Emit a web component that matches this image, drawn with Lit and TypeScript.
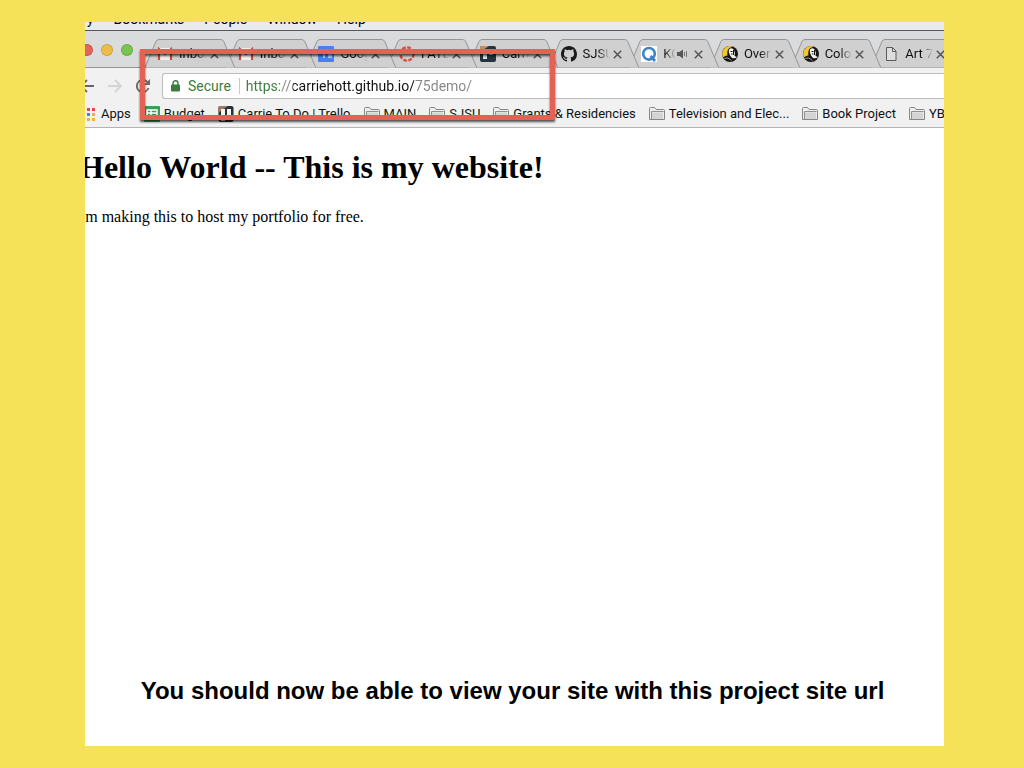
import { LitElement, html, css, svg, TemplateResult } from "lit";
import { customElement, property } from "lit/decorators.js";

const icons: Record<string, TemplateResult> = {
  gmail: svg`<rect x="1" y="2" width="14" height="12" fill="#f3f1f0"/><path d="M2 14V3l6 5 6-5v11" fill="none" stroke="#c9483c" stroke-width="2.2"/>`,
  calendar: svg`<rect width="16" height="16" rx="1" fill="#4a80ec"/><path d="M3 5h3v7M9 5h2v7M13 5v7" stroke="#fff" fill="none" stroke-width="1.2"/>`,
  canvas: svg`<circle cx="8" cy="8" r="6.6" fill="none" stroke="#d94b3a" stroke-width="2.4" stroke-dasharray="3.7 1.48"/>`,
  trello: svg`<rect width="16" height="16" rx="2" fill="#24343f"/><path d="M0 2Q0 0 2 0h7L0 6z" fill="#c98b5c"/><rect x="3" y="3" width="4" height="10" fill="#dfe6ea"/><rect x="9" y="3" width="4" height="6" fill="#dfe6ea"/>`,
  github: svg`<path fill="#1b1b1b" d="M8 0C3.58 0 0 3.58 0 8c0 3.54 2.29 6.53 5.47 7.59.4.07.55-.17.55-.38 0-.19-.01-.82-.01-1.49-2.01.37-2.53-.49-2.69-.94-.09-.23-.48-.94-.82-1.13-.28-.15-.68-.52-.01-.53.63-.01 1.08.58 1.23.82.72 1.21 1.87.87 2.33.66.07-.52.28-.87.51-1.07-1.78-.2-3.64-.89-3.64-3.95 0-.87.31-1.59.82-2.15-.08-.2-.36-1.02.08-2.12 0 0 .67-.21 2.2.82a7.6 7.6 0 014 0c1.53-1.04 2.2-.82 2.2-.82.44 1.1.16 1.92.08 2.12.51.56.82 1.27.82 2.15 0 3.07-1.87 3.75-3.65 3.95.29.25.54.73.54 1.48 0 1.07-.01 1.93-.01 2.2 0 .21.15.46.55.38A8.01 8.01 0 0016 8c0-4.42-3.58-8-8-8z"/>`,
  kqed: svg`<rect width="16" height="16" fill="#fff"/><circle cx="8" cy="7.8" r="5.8" fill="none" stroke="#3d83c6" stroke-width="2.6"/><path d="M9.5 10l4.5 5" stroke="#3d83c6" stroke-width="2.8"/>`,
  portrait: svg`<circle cx="8" cy="8" r="8" fill="#151412"/><path d="M8 0A8 8 0 001 11.500Q4 9 5.500 9.500 4.500 3 8.500 1.500L11 .6Q9.500 0 8 0z" fill="#f6c72c"/><path d="M7 3.500Q10 1 12 4q1.500 3 .5 6L15 11q-2 2-5 1L8 9.500Q6 6 7 3.500z" fill="#f2f0ea"/><path d="M8.500 5.500h2M9 8h1.500M11.500 4v5" fill="none" stroke="#151412"/><path d="M2.500 12.500q3-1.500 5 .5l2 1.500" fill="none" stroke="#cfcbc0" stroke-width=".8"/>`,
  page: svg`<path d="M3.500 1.500h6l3.500 3.500v9.500H3.500z" fill="#ddd" stroke="#5c5c5c"/><path d="M9.500 1.500V5.500H13" fill="none" stroke="#5c5c5c"/>`,
  sheets: svg`<rect width="16" height="16" rx="1" fill="#3f9c58"/><path d="M3 4h10v9H3zM3 7h10M3 10h10M7 4v9" fill="none" stroke="#fff" stroke-width="1.400"/>`,
  board: svg`<rect x=".5" width="15" height="16" rx="2" fill="#26313a"/><path d="M0 2Q0 0 2 0h8L0 7z" fill="#9c7a63"/><rect x="3" y="3" width="4" height="12" fill="#f5f5f5"/><rect x="9" y="3" width="4" height="9" fill="#f5f5f5"/>`,
  folder: svg`<path d="M.5 13.500v-11q0-1 1-1h4l1.500 2h7.500q1 0 1 1v9z" fill="#eee" stroke="#868686"/><path d="M2.500 13V6.500h11.500V13z" fill="#d4d4d4"/><path d="M2.500 13V5.500h12" fill="none" stroke="#909090"/>`,
  apps: svg`<rect x="1" y="2" width="3" height="3" fill="#db4b3f"/><rect x="6" y="2" width="3" height="3" fill="#db4b3f"/><rect x="11" y="2" width="3" height="3" fill="#db4b3f"/><rect x="1" y="7" width="3" height="3" fill="#3f9c58"/><rect x="6" y="7" width="3" height="3" fill="#4a80ec"/><rect x="11" y="7" width="3" height="3" fill="#f0b33a"/><rect x="1" y="12" width="3" height="3" fill="#3f9c58"/><rect x="6" y="12" width="3" height="3" fill="#f0b33a"/><rect x="11" y="12" width="3" height="3" fill="#f0b33a"/>`,
};

const icon = (name: string) =>
  html`<svg class="icon" viewBox="0 0 16 16" width="16" height="16" aria-hidden="true">${icons[name]}</svg>`;

@customElement("browser-tab")
class BrowserTab extends LitElement {
  @property() icon = "page";
  @property() label = "";
  @property({ type: Boolean }) audible = false;

  static styles = css`
    :host { display: grid; flex: 1 1 0; min-width: 0; height: 29px; position: relative; }
    .shape, .content { grid-area: 1 / 1; }
    .shape { width: calc(100% + 10px); height: 29px; }
    .content { display: flex; align-items: center; padding: 1px 7px 0 12px; min-width: 0; position: relative; }
    .icon { flex: none; margin-right: 6px; }
    button { border: 0; background: none; padding: 0; font: inherit; color: inherit; }
    .title {
      flex: 1 1 0; min-width: 0; text-align: left; overflow: hidden; white-space: nowrap;
      font: 13px/18px Roboto, sans-serif; color: #111;
      -webkit-mask-image: linear-gradient(to left, transparent, #000 12px);
      mask-image: linear-gradient(to left, transparent, #000 12px);
    }
    .speaker { flex: none; margin: 0 3px 0 1px; }
    .close { flex: none; width: 9px; height: 9px; display: flex; margin-left: 3px; }
  `;

  render() {
    return html`
      <svg class="shape" viewBox="0 0 91 29" preserveAspectRatio="none" aria-hidden="true">
        <path d="M0 28.500 L11 2.500 Q12 .5 14 .5 H76 Q78 .5 79 2.500 L90 28.500" fill="#d0d0d0" stroke="#959595"/>
      </svg>
      <div class="content">
        ${icon(this.icon)}
        <button class="title" role="tab">${this.label}</button>
        ${this.audible
          ? html`<svg class="speaker" width="11" height="10" viewBox="0 0 11 10" aria-label="Playing audio">
              <path d="M0 3h2.500L6 .5v9L2.500 7H0z" fill="#555"/><path d="M7.500 3v4M9.500 2v6" stroke="#777"/>
            </svg>`
          : ""}
        <button class="close" aria-label="Close tab">
          <svg width="9" height="9" viewBox="0 0 9 9"><path d="M.8.8l7.400 7.400M8.200.8L.8 8.200" stroke="#555" stroke-width="1.500"/></svg>
        </button>
      </div>
    `;
  }
}

const tabs = [
  ["gmail", "Inbox"], ["gmail", "Inbox"], ["calendar", "Google"], ["canvas", "FATE"],
  ["trello", "Carrie"], ["github", "SJSU"], ["kqed", "KQED"], ["portrait", "Over"],
  ["portrait", "Color"], ["page", "Art 75"],
];

const bookmarks = [
  ["sheets", "Budget"], ["board", "Carrie To Do | Trello"], ["folder", "MAIN"], ["folder", "SJSU"],
  ["folder", "Grants & Residencies"], ["folder", "Television and Elec..."],
  ["folder", "Book Project"], ["folder", "YB"],
];

@customElement("app-root")
class AppRoot extends LitElement {
  static styles = css`
    :host {
      display: flex; box-sizing: border-box; min-height: 100vh;
      padding: 22px 80px 22px 85px; background: #f5e259; color: #000;
      font-family: Roboto, sans-serif;
    }
    .slide { flex: 1; min-width: 0; display: flex; flex-direction: column; background: #fff; overflow: hidden; position: relative; }
    button { border: 0; background: none; padding: 0; font: inherit; }
    svg { display: block; flex: none; }

    .menubar { height: 8px; background: #e9eaed; border-bottom: 1px solid #55595c; overflow: hidden; display: flex; align-items: flex-end; }
    .menus { display: flex; gap: 20px; margin-left: -36px; padding-bottom: 2px; font-size: 14px; line-height: 18px; }

    .tabstrip { display: flex; align-items: flex-end; height: 36px; background: #dadbdc; border-bottom: 1px solid #959595; }
    .lights { flex: none; width: 64px; display: flex; gap: 8px; margin: 0 0 11px -4px; }
    .light { width: 12px; height: 12px; border-radius: 50%; box-sizing: border-box; border: 1px solid #0002; }
    .red { background: #e4635a; }
    .amber { background: #ecbd4a; }
    .green { background: #78c650; }
    .tabs { flex: 1; min-width: 0; display: flex; margin: 0 -8px -1px 0; }

    .toolbar { background: #f1f1f1; border-bottom: 1px solid #b4b4b4; }
    .location { display: flex; align-items: center; padding-top: 5px; height: 26px; }
    .nav { display: flex; gap: 12px; margin-left: -6px; width: 83px; flex: none; }
    .omnibox {
      flex: 1; min-width: 0; height: 24px; display: flex; align-items: center; background: #fff;
      border: 1px solid #bcbcbc; border-right: 0; border-radius: 3px 0 0 3px; padding-left: 8px; font-size: 14px;
    }
    .secure { color: #3c7d3e; margin-left: 8px; padding-right: 8px; margin-right: 6px; border-right: 1px solid #c8c8c8; line-height: 16px; }
    .url {
      flex: 1; min-width: 0; border: 0; padding: 0; outline: 0; font: 14px/20px Roboto, sans-serif;
      background: linear-gradient(to right, #3c7d3e 34px, #858585 34px 47px, #111 47px 168px, #858585 168px);
      -webkit-background-clip: text; background-clip: text; -webkit-text-fill-color: transparent;
    }
    .bookmarks { display: flex; align-items: center; gap: 13px; height: 28px; padding-top: 1px; box-sizing: border-box; font-size: 13px; line-height: 18px; white-space: nowrap; overflow: hidden; }
    .bookmark { display: flex; align-items: center; gap: 4px; flex: none; color: #111; text-decoration: none; }
    .apps { margin-left: -4px; }

    .highlight {
      position: absolute; z-index: 20; left: 55px; top: 27px; width: 405px; height: 61px;
      border: 5px solid #e46253; filter: drop-shadow(0 2px 1px #000a);
      pointer-events: none;
    }
    .page { font-family: "Liberation Serif", serif; margin-left: -6px; white-space: nowrap; }
    h1 { font-size: 32px; line-height: 36px; margin: 21px 0 23px; }
    .page p { font-size: 16px; line-height: 18px; margin: 0 0 0 -2px; }
    .caption {
      margin: auto 0 0; padding: 0 16px 40px 12px; text-align: center;
      font: bold 24px/30px "Liberation Sans", sans-serif;
    }
  `;

  render() {
    return html`
      <main class="slide">
        <div class="menubar">
          <div class="menus"><span>History</span><span>Bookmarks</span><span>People</span><span>Window</span><span>Help</span></div>
        </div>
        <div class="tabstrip">
          <div class="lights">
            <button class="light red" aria-label="Close"></button>
            <button class="light amber" aria-label="Minimize"></button>
            <button class="light green" aria-label="Zoom"></button>
          </div>
          <div class="tabs" role="tablist">
            ${tabs.map(([name, label], i) => html`
              <browser-tab style="z-index:${tabs.length - i}" .icon=${name} .label=${label} .audible=${name === "kqed"}></browser-tab>
            `)}
          </div>
        </div>
        <div class="toolbar">
          <div class="location">
            <div class="nav">
              <button aria-label="Back"><svg width="16" height="16" viewBox="0 0 16 16"><path d="M15 8H2M8 2L2 8l6 6" fill="none" stroke="#666" stroke-width="1.800"/></svg></button>
              <button aria-label="Forward"><svg width="16" height="16" viewBox="0 0 16 16"><path d="M1 8h13M8 2l6 6-6 6" fill="none" stroke="#d4d4d4" stroke-width="1.800"/></svg></button>
              <button aria-label="Reload"><svg width="16" height="16" viewBox="0 0 16 16"><path d="M13.500 10A6 6 0 118 2q3 0 5 2.500" fill="none" stroke="#6a6a6a" stroke-width="1.900"/><path d="M15 1v6H9z" fill="#6a6a6a"/></svg></button>
            </div>
            <div class="omnibox">
              <svg width="9" height="12" viewBox="0 0 9 12"><rect y="4.500" width="9" height="7" rx="1" fill="#3c7d3e"/><path d="M2 5V3.300a2.500 2.500 0 015 0V5" fill="none" stroke="#3c7d3e" stroke-width="1.400"/></svg>
              <label class="secure" for="url">Secure</label>
              <input class="url" id="url" type="text" value="https://carriehott.github.io/75demo/" spellcheck="false">
            </div>
          </div>
          <nav class="bookmarks">
            <a class="bookmark apps" href="#">${icon("apps")}Apps</a>
            ${bookmarks.map(([name, label]) => html`<a class="bookmark" href="#">${icon(name)}${label}</a>`)}
          </nav>
        </div>
        <section class="page">
          <h1>Hello World -- This is my website!</h1>
          <p>I'm making this to host my portfolio for free.</p>
        </section>
        <p class="caption">You should now be able to view your site with this project site url</p>
        <div class="highlight"></div>
      </main>
    `;
  }
}
